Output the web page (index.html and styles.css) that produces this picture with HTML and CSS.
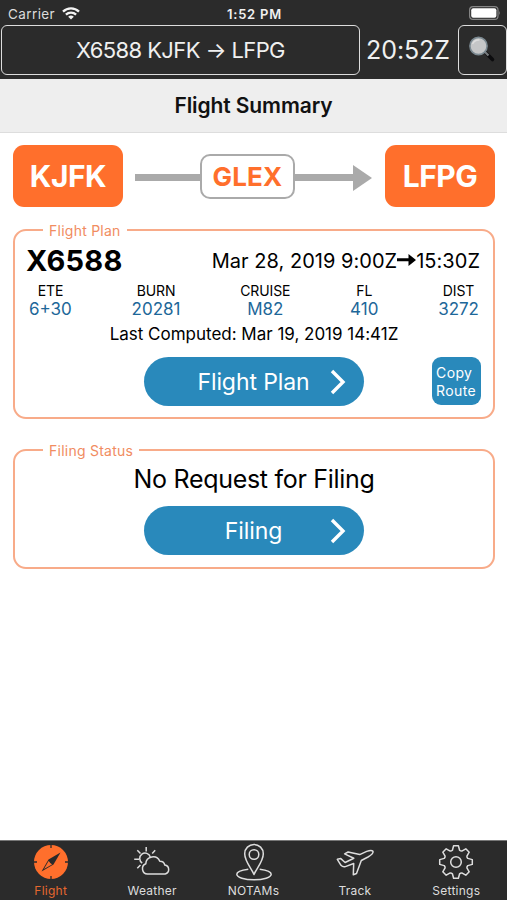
FILE: index.html
```html
<!DOCTYPE html>
<html lang="en">
<head>
<meta charset="utf-8">
<title>Flight Summary</title>
<link rel="stylesheet" href="styles.css">
</head>
<body>
<div class="app">
  <div class="status">
    <div class="carrier"><span>Carrier</span>
      <svg width="18" height="13" viewBox="0 0 18 13" fill="none" stroke="#f4f4f4" stroke-width="2.3"><path d="M1 4.7a11.5 11.5 0 0 1 16 0M3.9 7.7a7.4 7.4 0 0 1 10.2 0"/><path d="M9 12.5 6.2 9.8a4 4 0 0 1 5.6 0z" fill="#f4f4f4" stroke="none"/></svg>
    </div>
    <div class="clock">1:52 PM</div>
    <svg class="battery" width="32" height="14" viewBox="0 0 32 14"><rect x=".6" y=".6" width="28.4" height="12.8" rx="3.5" fill="none" stroke="#858585" stroke-width="1.2"/><rect x="2.2" y="2.2" width="25.2" height="9.6" rx="2" fill="#fff"/><path d="M30.2 4.8q1.6 2.2 0 4.4z" fill="#858585"/></svg>
  </div>
  <header class="topbar">
    <div class="selector">X6588 KJFK → LFPG</div>
    <div class="zulu">20:52Z</div>
    <div class="search">
      <svg width="28" height="28" viewBox="0 0 28 28"><path d="m18 17 6.5 6.5" stroke="#0c0c0e" stroke-width="3.6" stroke-linecap="round"/><path d="m16.5 15.5 4 4" stroke="#74787b" stroke-width="2.3"/><circle cx="10.5" cy="10" r="8.6" fill="#c5c6c7" stroke="#7b8991" stroke-width="1.6"/><path d="M4.5 8a7 7 0 0 1 7-4" fill="none" stroke="#dedede" stroke-width="1.5"/></svg>
    </div>
  </header>
  <h1 class="title">Flight Summary</h1>
  <main class="content">
    <section class="route">
      <div class="airport"><span>KJFK</span></div>
      <div class="leg"><i class="line first"></i><div class="aircraft">GLEX</div><i class="line"></i><i class="head"></i></div>
      <div class="airport"><span>LFPG</span></div>
    </section>
    <fieldset class="card plan">
      <legend>Flight Plan</legend>
      <div class="heading"><b>X6588</b><div class="times"><span>Mar 28, 2019 9:00Z</span><svg width="19" height="14" viewBox="0 0 19 14"><path d="M0 5.3h11.5V1L19 7l-7.500 6V8.300H0z"/></svg><span>15:30Z</span></div></div>
      <div class="stats">
        <div><small>ETE</small><em>6+30</em></div>
        <div><small>BURN</small><em>20281</em></div>
        <div><small>CRUISE</small><em>M82</em></div>
        <div><small>FL</small><em>410</em></div>
        <div><small>DIST</small><em>3272</em></div>
      </div>
      <p class="computed">Last Computed: Mar 19, 2019 14:41Z</p>
      <div class="actions">
        <div class="pill"><span>Flight Plan</span><svg width="16" height="26" viewBox="0 0 16 26"><path d="m2 2 11 11L2 24"/></svg></div>
        <div class="copy">Copy<br>Route</div>
      </div>
    </fieldset>
    <fieldset class="card filing">
      <legend>Filing Status</legend>
      <p class="message">No Request for Filing</p>
      <div class="actions">
        <div class="pill"><span>Filing</span><svg width="16" height="26" viewBox="0 0 16 26"><path d="m2 2 11 11L2 24"/></svg></div>
      </div>
    </fieldset>
  </main>
  <nav class="tabs">
    <div class="tab active">
      <svg width="40" height="40" viewBox="-20 -20 40 40"><circle r="17" fill="#ff6f2c"/><path d="M0-17v3M0 17v-3M-17 0h3M17 0h-3" stroke="#2b2b2b" stroke-width="1.3"/><path d="M9.5-9.5 2.5 2.5-9.5 9.5-2.5-2.5z" fill="#2b2b2b"/><path d="m-7 7 4.600-8 3.400 3.400z" fill="#ff6f2c"/><circle r="1.2" fill="#2b2b2b"/></svg>
      <span>Flight</span>
    </div>
    <div class="tab">
      <svg width="40" height="40" viewBox="-20 -20 40 40"><path d="M-4.500 12a5.300 5.300 0 0 1-1.700-10.200A7.300 7.300 0 0 1 7.800-.8 5 5 0 0 1 12.800 3a4.600 4.600 0 0 1 .4 9z"/><path d="M-9.800 1A5.400 5.400 0 1 1-1.700-5M-5.800-10.500V-15M-11.500-8.500l-3.200-3.200M-13-2.700h-4.800M-11.500 3l-3.200 3.200M.2-8.500 3.200-11.700"/></svg>
      <span>Weather</span>
    </div>
    <div class="tab">
      <svg width="40" height="40" viewBox="-20 -20 40 40"><path d="M0 12.500C-2 7-9.300-.5-9.300-8.300a9.300 9.300 0 0 1 18.600 0C9.300-.5 2 7 0 12.500z"/><circle cy="-7.500" r="4.800"/><path d="M-5.700 7.200C-12.700 8-17.200 10-17.200 12.300c0 3.100 7.700 5.500 17.200 5.500s17.200-2.400 17.200-5.500C17.200 10 12.700 8 5.700 7.200"/></svg>
      <span>NOTAMs</span>
    </div>
    <div class="tab">
      <svg width="40" height="40" viewBox="-20 -20 40 40"><path d="M-17.700-2.700-14.200-3.400-9.900.5-1.200-3.700-10.400-8.100-6.900-10 4.700-7.400 11.700-10.600Q16.500-12.200 18-10.700 18.700-8.200 13-5L6.300-1.500 1.500 11.500-1.700 12.700-1.300 1.500-9.600 4.600Q-12.200 5.300-14 3.300z"/></svg>
      <span>Track</span>
    </div>
    <div class="tab">
      <svg width="40" height="40" viewBox="-20 -20 40 40"><path d="M-3.6-11.8-2.4-16.3H2.4L3.6-11.8Q4.6-10.8 5.8-10.9L9.8-13.2 13.2-9.8 10.9-5.8Q10.8-4.6 11.8-3.6L16.3-2.4V2.4L11.8 3.6Q10.8 4.6 10.9 5.8L13.2 9.8 9.8 13.2 5.8 10.9Q4.6 10.8 3.6 11.8L2.4 16.3H-2.4L-3.6 11.8Q-4.6 10.8-5.8 10.9L-9.8 13.2-13.2 9.8-10.9 5.8Q-10.8 4.6-11.8 3.6L-16.3 2.4V-2.4L-11.8-3.6Q-10.8-4.6-10.9-5.8L-13.2-9.8-9.8-13.2-5.8-10.9Q-4.6-10.8-3.6-11.8z"/><circle r="5.3"/></svg>
      <span>Settings</span>
    </div>
  </nav>
</div>
</body>
</html>
```
FILE: styles.css
```css
* { box-sizing: border-box; }
body { margin: 0; font-family: Inter, "Liberation Sans", sans-serif; background: #fff; color: #000; }
p, h1 { margin: 0; }
svg { display: block; flex: none; }
.app { width: 507px; height: 900px; display: flex; flex-direction: column; overflow: hidden; }

.status { height: 25px; flex: none; background: #2b2b2b; color: #f0f0f0; display: grid; grid-template-columns: 1fr auto 1fr; align-items: center; padding: 2px 6px 0 8px; font-size: 13px; }
.carrier { display: flex; align-items: center; gap: 7px; color: #dcdcdc; font-size: 13.5px; letter-spacing: .4px; }
.clock { font-weight: 600; letter-spacing: .8px; }
.battery { justify-self: end; margin-top: -2px; }

.topbar { height: 54px; flex: none; background: #2b2b2b; color: #f0f0f0; display: flex; align-items: flex-start; }
.selector, .search { height: 50px; border: 1.5px solid #ddd; border-radius: 6px; display: flex; align-items: center; justify-content: center; }
.selector { width: 359px; margin-left: 1px; font-size: 22px; letter-spacing: -.6px; }
.zulu { width: 97px; height: 50px; display: flex; align-items: center; justify-content: center; font-size: 25px; letter-spacing: -.1px; }
.search { width: 49px; margin-left: 1px; padding-right: 2px; }
.zulu { padding-right: 1px; }

.title { height: 54px; flex: none; background: #eee; border-bottom: 1px solid #ddd; display: flex; align-items: center; justify-content: center; font-size: 21px; font-weight: 600; letter-spacing: -.1px; color: #111; }
.content { flex: 1; padding: 12px 12px 0 13px; }

.route { height: 62px; display: flex; align-items: center; }
.airport { width: 110px; height: 62px; border-radius: 11px; background: #ff6f2c; color: #fff; font-weight: 700; font-size: 30px; letter-spacing: -.5px; display: flex; align-items: center; justify-content: center; }
.leg { flex: 1; display: flex; align-items: center; padding: 0 13px 0 12px; }
.line { height: 7px; background: #aaa; flex: 1; margin-top: 3px; }
.line.first { flex: 0 0 65px; }
.aircraft { width: 95px; height: 45px; border: 2px solid #aaa; border-radius: 10px; color: #ff6f2c; font-size: 26px; font-weight: 700; letter-spacing: .2px; display: flex; align-items: center; justify-content: center; }
.head { border-left: 19px solid #aaa; border-top: 13px solid transparent; border-bottom: 13px solid transparent; margin-top: 3px; }

.card { margin: 0; min-width: 0; border: 2px solid #f8ab89; border-radius: 13px; padding: 0; }
.card legend { margin-left: 28px; padding: 1px 6px 0; height: 18px; line-height: 18px; font-size: 14px; letter-spacing: .25px; color: #f18c61; }
.plan { margin-top: 14px; height: 198px; }
.filing { margin-top: 22px; height: 128px; }
.heading { height: 43px; display: flex; align-items: center; justify-content: space-between; padding: 0 13px 0 11px; }
.heading b { font-size: 29px; letter-spacing: .2px; }
.times { display: flex; align-items: center; font-size: 20px; letter-spacing: .03px; }
.times svg { margin-top: -2px; }
.stats { display: flex; justify-content: space-between; padding: 0 14px; height: 38px; margin-top: -1px; }
.stats div { display: flex; flex-direction: column; align-items: center; }
.stats small { font-size: 14px; line-height: 19px; letter-spacing: -.1px; }
.stats em { font-style: normal; font-size: 17px; line-height: 19px; color: #1d6799; }
.computed { height: 38px; line-height: 31px; text-align: center; font-size: 17px; letter-spacing: -.01px; }
.actions { display: grid; grid-template-columns: 1fr 220px 1fr; }
.pill { grid-column: 2; height: 49px; border-radius: 25px; background: #2989bb; color: #fff; font-size: 23px; letter-spacing: -.1px; display: grid; grid-template-columns: 1fr auto; align-items: center; padding: 0 18px 0 33px; text-align: center; }
.pill path { fill: none; stroke: #fff; stroke-width: 3.4; }
.copy { justify-self: end; margin-right: 12px; width: 49px; height: 48px; border-radius: 9px; background: #2989bb; color: #fff; font-size: 14px; letter-spacing: .4px; line-height: 18px; padding: 7px 0 0 4px; }
.message { height: 47px; line-height: 41px; text-align: center; font-size: 25px; letter-spacing: -.3px; }

.tabs { height: 60px; flex: none; background: #2b2b2b; border-top: 1px solid #777; display: flex; color: #ddd; }
.tab { flex: 1; display: flex; flex-direction: column; align-items: center; padding-top: 1px; font-size: 12px; line-height: 17px; letter-spacing: .25px; }
.tab svg { fill: none; stroke: #ddd; stroke-width: 1.5; stroke-linejoin: round; }
.tab.active svg { stroke: none; }
.active { color: #e5682f; }
```
